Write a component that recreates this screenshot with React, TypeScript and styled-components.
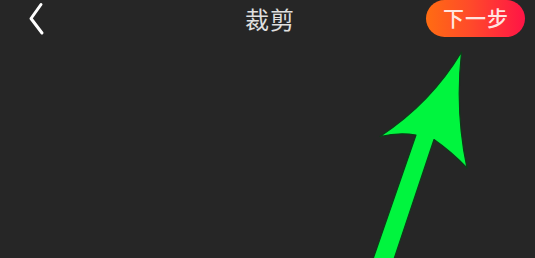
import React from "react";
import styled, { createGlobalStyle } from "styled-components";

const Global = createGlobalStyle`
  html, body { margin: 0; padding: 0; background: #262626; }
  body { width: 535px; height: 258px; overflow: hidden; }
`;

const Screen = styled.div`
  position: relative;
  width: 535px;
  height: 258px;
  background: #262626;
  overflow: hidden;
  font-family: "Noto Sans CJK SC", "Noto Sans", sans-serif;
`;

const Header = styled.header`
  display: grid;
  grid-template-columns: 1fr auto 1fr;
  align-items: center;
  height: 37px;
  padding: 0 10px 0 29px;
`;

const BackButton = styled.button`
  justify-self: start;
  display: flex;
  align-items: center;
  background: none;
  border: 0;
  padding: 0;
  width: 16px;
  height: 34px;
  cursor: pointer;
`;

const Title = styled.h1`
  margin: 0;
  padding: 0 14px 0 0;
  font-size: 24px;
  font-weight: 400;
  line-height: 1;
  color: #e0e0e0;
  letter-spacing: 1px;
`;

const NextButton = styled.button`
  justify-self: end;
  width: 99px;
  height: 37px;
  border: 0;
  border-radius: 19px;
  background: linear-gradient(90deg, #ff6c12 0%, #ff4a2a 45%, #ff1446 100%);
  color: rgba(255, 240, 236, 0.95);
  font-family: "Noto Sans CJK SC", "Noto Sans", sans-serif;
  font-size: 21px;
  font-weight: 500;
  line-height: 1;
  padding: 0 0 2px 1px;
  letter-spacing: 1px;
`;

const Arrow = styled.svg`
  position: absolute;
  left: 0;
  top: 0;
  pointer-events: none;
`;

export default function App() {
  return (
    <Screen>
      <Global />
      <Header>
        <BackButton aria-label="返回">
          <svg width="16" height="34" viewBox="0 0 16 34">
            <polyline
              points="12,2.5 2,16.5 13,31"
              fill="none"
              stroke="#ffffff"
              strokeWidth="3"
              strokeLinecap="round"
              strokeLinejoin="round"
            />
          </svg>
        </BackButton>
        <Title>裁剪</Title>
        <NextButton>下一步</NextButton>
      </Header>
      <Arrow width="535" height="258" viewBox="0 0 535 258">
        <path
          d="M461.5,52 Q431,103 380,136.5 Q399,132 416,135 L372,262 L393,262 L434,139.5 Q452,152 467,168 Q455,112 461.5,52 Z"
          fill="#00f53e"
          stroke="#0d3a18"
          strokeWidth="1.2"
          strokeLinejoin="round"
        />
      </Arrow>
    </Screen>
  );
}
